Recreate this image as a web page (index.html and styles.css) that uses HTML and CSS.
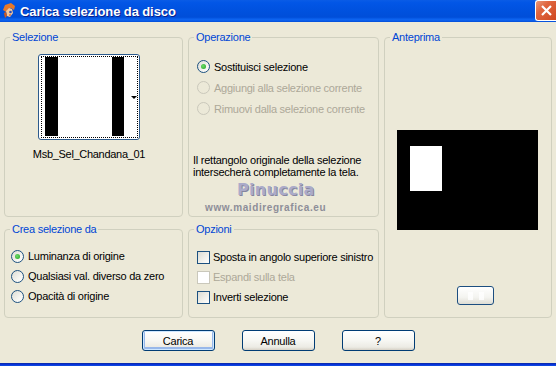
FILE: index.html
```html
<!DOCTYPE html>
<html lang="it">

<head>
  <meta charset="UTF-8">
  <meta name="viewport" content="width=device-width, initial-scale=1.0">
  <title>Carica selezione da disco</title>
  <link rel="stylesheet" href="styles.css">
</head>

<body>
  <div class="window">

    <div class="titlebar">
      <svg class="app-icon" width="15" height="16" viewBox="0 0 15 16">
        <path d="M3 2 L9 0 L13 3 L12 7 L9 5 L6 6 L4 9 L1 7 Z" fill="#E8782A"/>
        <path d="M4 8 L7 5 L10 6 L11 10 L8 14 L5 13 Z" fill="#F6C79A"/>
        <path d="M2 10 L4 9 L5 13 L3 15 Z" fill="#D25A1C"/>
        <circle cx="8.5" cy="9" r="1.3" fill="#2A4FB8"/>
        <path d="M7 12 L9 12" stroke="#B5452A" stroke-width="1"/>
      </svg>
      <span class="title">Carica selezione da disco</span>
      <button class="close-btn" type="button">
        <svg width="11" height="11" viewBox="0 0 11 11">
          <path d="M1 1 L10 10 M10 1 L1 10" stroke="#fff" stroke-width="2.2"/>
        </svg>
      </button>
    </div>

    <div class="dialog">
      <div class="groups">

        <fieldset class="group group-sel">
          <legend>Selezione</legend>
          <div class="thumb-wrap">
            <button class="thumb" type="button">
              <span class="thumb-focus">
                <span class="thumb-img"></span>
                <span class="thumb-arrow"></span>
              </span>
            </button>
            <div class="thumb-name">Msb_Sel_Chandana_01</div>
          </div>
        </fieldset>

        <fieldset class="group group-op">
          <legend>Operazione</legend>
          <div class="opt-list">
            <label class="opt"><span class="radio checked"></span>Sostituisci selezione</label>
            <label class="opt disabled"><span class="radio"></span>Aggiungi alla selezione corrente</label>
            <label class="opt disabled"><span class="radio"></span>Rimuovi dalla selezione corrente</label>
          </div>
          <p class="note">Il rettangolo originale della selezione<br>intersecherà completamente la tela.</p>
          <div class="watermark">
            <div class="wm-name">Pinuccia</div>
            <div class="wm-site">www.maidiregrafica.eu</div>
          </div>
        </fieldset>

        <fieldset class="group group-preview">
          <legend>Anteprima</legend>
          <div class="preview">
            <div class="preview-sel"></div>
          </div>
          <button class="zoom-btn" type="button">
            <span class="zoom-glyph"></span>
          </button>
        </fieldset>

        <fieldset class="group group-crea">
          <legend>Crea selezione da</legend>
          <div class="opt-list">
            <label class="opt"><span class="radio checked"></span>Luminanza di origine</label>
            <label class="opt"><span class="radio"></span>Qualsiasi val. diverso da zero</label>
            <label class="opt"><span class="radio"></span>Opacità di origine</label>
          </div>
        </fieldset>

        <fieldset class="group group-opz">
          <legend>Opzioni</legend>
          <div class="opt-list">
            <label class="opt"><span class="check"></span>Sposta in angolo superiore sinistro</label>
            <label class="opt disabled"><span class="check"></span>Espandi sulla tela</label>
            <label class="opt"><span class="check"></span>Inverti selezione</label>
          </div>
        </fieldset>

      </div>

      <div class="actions">
        <button class="btn btn-default" type="button">Carica</button>
        <button class="btn" type="button">Annulla</button>
        <button class="btn" type="button">?</button>
      </div>
    </div>

    <div class="frame-bottom"></div>
  </div>
</body>

</html>
```

FILE: styles.css
```css
body {
  margin: 0;
  padding: 0;
  font-family: "Liberation Sans", Arial, sans-serif;
  font-size: 11px;
  letter-spacing: -0.25px;
  color: #000;
}

.window {
  width: 556px;
  height: 366px;
  display: flex;
  flex-direction: column;
  background-color: #ECE9D8;
  overflow: hidden;
}

/* title bar */
.titlebar {
  height: 22px;
  flex: none;
  display: flex;
  align-items: center;
  padding-left: 2px;
  background: linear-gradient(to bottom, #0A5CE6 0%, #0256E6 12%, #0051DE 50%, #004ED9 78%, #0D64F0 88%, #0A5BE8 96%, #0048D0 100%);
}

.app-icon {
  flex: none;
}

.title {
  margin-left: 3px;
  color: #fff;
  font-weight: bold;
  font-size: 13px;
  letter-spacing: -0.1px;
  text-shadow: 1px 1px 0 #0A1E8A;
}

.close-btn {
  margin-left: auto;
  align-self: flex-start;
  width: 21px;
  height: 21px;
  padding: 0;
  border: 1px solid #fff;
  border-right: none;
  border-radius: 3px 0 0 3px;
  background: linear-gradient(135deg, #E99A7C 0%, #E0663F 35%, #CF4720 100%);
  display: flex;
  align-items: center;
  justify-content: center;
}

/* dialog body */
.dialog {
  flex: 1;
  padding: 9px 4px 0 4px;
}

.groups {
  display: grid;
  grid-template-columns: 179px 191px 168px;
  grid-template-rows: 186px 95px;
  column-gap: 5px;
  row-gap: 6px;
}

.group {
  margin: 0;
  padding: 0;
  min-width: 0;
  border: 1px solid #D0D0BF;
  border-radius: 4px;
  box-sizing: border-box;
}

.group legend {
  margin-left: 5px;
  padding: 0 2px;
  font-size: 11px;
  line-height: 12px;
  color: #0046D5;
}

.group-sel { grid-column: 1; grid-row: 1; }
.group-op { grid-column: 2; grid-row: 1; }
.group-preview { grid-column: 3; grid-row: 1 / 3; }
.group-crea { grid-column: 1; grid-row: 2; }
.group-opz { grid-column: 2; grid-row: 2; }

/* selection thumbnail */
.thumb-wrap {
  width: 102px;
  margin: 11px 0 0 33px;
  display: flex;
  flex-direction: column;
  align-items: center;
}

.thumb {
  width: 102px;
  height: 86px;
  padding: 1px 2px;
  display: flex;
  border: 1px solid #2C5A8C;
  border-radius: 3px;
  background: #fff;
  box-sizing: border-box;
}

.thumb-focus {
  flex: 1;
  display: flex;
  align-items: center;
  padding-left: 3px;
  border: 1px dotted #000;
}

.thumb-img {
  width: 79px;
  height: 79px;
  align-self: flex-start;
  background: linear-gradient(to right, #000 0, #000 13px, #fff 13px, #fff 67px, #000 67px, #000 79px);
}

.thumb-arrow {
  margin-left: 7px;
  width: 0;
  height: 0;
  border-left: 3px solid transparent;
  border-right: 3px solid transparent;
  border-top: 3px solid #000;
}

.thumb-name {
  margin-top: 8px;
  font-size: 11px;
  line-height: 13px;
  letter-spacing: -0.3px;
  white-space: nowrap;
}

/* option rows */
.opt-list {
  display: flex;
  flex-direction: column;
}

.opt {
  height: 21px;
  display: flex;
  align-items: center;
  white-space: nowrap;
}

.opt.disabled {
  color: #ACA899;
}

.group-op .opt-list {
  padding: 13px 0 0 8px;
}

.group-crea .opt-list {
  padding: 11px 0 0 6px;
}

.group-crea .opt,
.group-opz .opt {
  height: 20px;
}

.group-opz .opt-list {
  padding: 12px 0 0 8px;
}

.radio {
  width: 13px;
  height: 13px;
  margin-right: 4px;
  flex: none;
  border: 1px solid #1C5180;
  border-radius: 50%;
  box-sizing: border-box;
  background: linear-gradient(135deg, #DCDCD4 0%, #F4F4F0 60%, #FFFFFF 100%);
  display: flex;
  align-items: center;
  justify-content: center;
}

.radio.checked::after {
  content: "";
  width: 5px;
  height: 5px;
  border-radius: 50%;
  background: radial-gradient(circle at 40% 40%, #6EDC6A, #21A121);
}

.opt.disabled .radio {
  border-color: #CAC8BB;
  background: #ECE9D8;
}

.check {
  width: 13px;
  height: 13px;
  margin-right: 3px;
  flex: none;
  border: 1px solid #1C5180;
  box-sizing: border-box;
  background: linear-gradient(135deg, #DCDCD4 0%, #F0F0EA 55%, #FFFFFF 100%);
}

.opt.disabled .check {
  border-color: #CAC8BB;
  background: #fff;
}

.note {
  margin: 35px 0 0 4px;
  line-height: 12px;
}

.watermark {
  margin-top: 2px;
}

.wm-name {
  margin-left: 48px;
  font-family: "DejaVu Sans", sans-serif;
  font-weight: bold;
  font-size: 16px;
  line-height: 20px;
  color: #ABABC9;
  text-shadow: 1px 1px 0 #85859F;
  letter-spacing: 0.3px;
}

.wm-site {
  margin: 2px 0 0 16px;
  font-weight: bold;
  font-size: 10px;
  line-height: 12px;
  color: #8E8E98;
  letter-spacing: 0.6px;
}

/* preview */
.preview {
  width: 141px;
  height: 100px;
  margin: 87px 0 0 12px;
  padding: 16px 0 0 13px;
  box-sizing: border-box;
  background: #000;
}

.preview-sel {
  width: 32px;
  height: 45px;
  background: #fff;
}

.zoom-btn {
  width: 37px;
  height: 19px;
  margin: 56px 0 0 72px;
  padding: 0;
  border: 1px solid #1C4E80;
  border-radius: 3px;
  background: linear-gradient(to bottom, #FFFFFF 0%, #F4F4F0 60%, #DEDDD4 100%);
  display: flex;
  align-items: center;
  justify-content: center;
}

.zoom-glyph {
  width: 16px;
  height: 8px;
  background: linear-gradient(to right, #fff 0, #fff 5px, transparent 5px, transparent 11px, #fff 11px);
  opacity: 0.8;
}

/* bottom buttons */
.actions {
  margin-top: 12px;
  display: flex;
  justify-content: center;
  gap: 27px;
}

.btn {
  width: 73px;
  height: 21px;
  padding: 0;
  border: 1px solid #003C74;
  border-radius: 3px;
  background: linear-gradient(to bottom, #FFFFFF 0%, #F7F7F3 50%, #ECEBE4 85%, #D6D0C5 100%);
  font-family: "Liberation Sans", Arial, sans-serif;
  font-size: 11px;
  letter-spacing: -0.25px;
  color: #000;
}

.btn-default {
  box-shadow: inset 0 0 0 1px #CEE7FF, inset 0 -1px 0 2px #98B8EA;
}

.frame-bottom {
  height: 3px;
  flex: none;
  background: linear-gradient(to bottom, #0A2B9E, #0831D9 50%, #1150E0);
}
```
